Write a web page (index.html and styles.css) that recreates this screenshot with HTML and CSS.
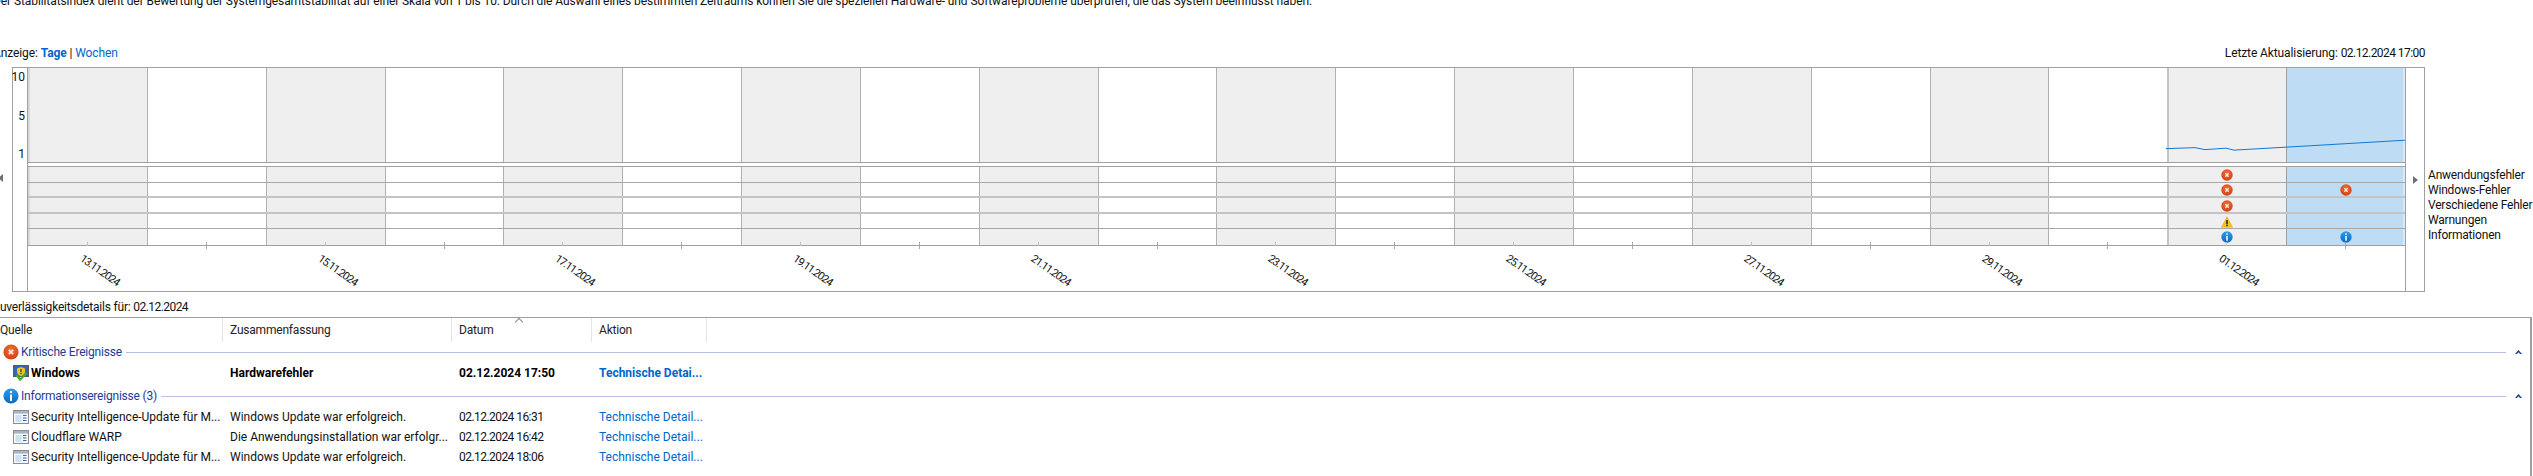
FILE: index.html
```html
<!DOCTYPE html>
<html lang="de">
<head>
  <meta charset="UTF-8" />
  <title>Zuverlässigkeitsverlauf</title>
  <link rel="stylesheet" href="styles.css">
</head>
<body>
  <svg class="defs" width="0" height="0">
    <defs>
      <radialGradient id="errorFill" cx="50%" cy="35%" r="65%">
        <stop offset="0" stop-color="#f0703a"/>
        <stop offset="1" stop-color="#d23f10"/>
      </radialGradient>
      <linearGradient id="infoFill" x1="0" y1="0" x2="0" y2="1">
        <stop offset="0" stop-color="#2f9be8"/>
        <stop offset="1" stop-color="#0a6cc4"/>
      </linearGradient>
      <symbol id="errorIcon" viewBox="0 0 16 16">
        <circle cx="8" cy="8" r="7.6" fill="url(#errorFill)"/>
        <path d="M5.8 5.8l4.4 4.4M10.2 5.8l-4.4 4.4" stroke="#fbe9e0" stroke-width="1.8"/>
      </symbol>
      <symbol id="infoIcon" viewBox="0 0 16 16">
        <circle cx="8" cy="8" r="7.6" fill="url(#infoFill)"/>
        <rect x="7" y="3" width="2" height="2" fill="#fff"/>
        <rect x="7" y="6.4" width="2" height="6.6" fill="#fff"/>
      </symbol>
      <symbol id="warnIcon" viewBox="0 0 16 16">
        <path d="M8 1L15.4 15H.6z" fill="#f7c51c" stroke="#d89b10" stroke-width=".6"/>
        <rect x="7" y="5.4" width="2" height="5.4" fill="#222"/>
        <rect x="7" y="11.6" width="2" height="2" fill="#222"/>
      </symbol>
      <symbol id="windowIcon" viewBox="0 0 16 16">
        <rect x=".5" y="1.5" width="15" height="13" fill="#f7f8fa" stroke="#8d8d8d"/>
        <rect x="1" y="2" width="14" height="2.6" fill="#a8b4c4"/>
        <rect x="2.5" y="6" width="6" height="7" fill="#cfe0f4"/>
        <path d="M10 6.5h3.5M10 9h3.5M10 11.5h3.5" stroke="#3d66a8"/>
      </symbol>
      <symbol id="windowsIcon" viewBox="0 0 16 16">
        <rect x=".5" y=".5" width="15" height="11" fill="#3466b8" stroke="#5a5a5a"/>
        <path d="M8 2L12 3.4V7c0 2-2 3.4-4 4.2C6 10.4 4 9 4 7V3.4z" fill="#e8c62c"/>
        <path d="M7.3 4h1.4v3.2H7.3zM7.3 8h1.4v1.3H7.3z" fill="#444"/>
        <path d="M3.5 10l3.6 4.6L13.5 8" fill="none" stroke="#3fae2a" stroke-width="2.2"/>
      </symbol>
    </defs>
  </svg>

  <div class="page">
    <p class="intro">Der Stabilitätsindex dient der Bewertung der Systemgesamtstabilität auf einer Skala von 1 bis 10. Durch die Auswahl eines bestimmten Zeitraums können Sie die speziellen Hardware- und Softwareprobleme überprüfen, die das System beeinflusst haben.</p>

    <div class="toolbar">
      <span>Anzeige: <a class="link strong">Tage</a> | <a class="link">Wochen</a></span>
      <span>Letzte Aktualisierung: <span class="stamp">02.12.2024 17:00</span></span>
    </div>

    <div class="chart-wrap">
      <div class="arrow arrow-left"></div>
      <div class="chart">
        <div class="y-axis">
          <span>10</span>
          <span>5</span>
          <span>1</span>
        </div>
        <div class="plot">
          <div class="index days">
            <div class="day"></div><div class="day"></div><div class="day"></div><div class="day"></div>
            <div class="day"></div><div class="day"></div><div class="day"></div><div class="day"></div>
            <div class="day"></div><div class="day"></div><div class="day"></div><div class="day"></div>
            <div class="day"></div><div class="day"></div><div class="day"></div><div class="day"></div>
            <div class="day"></div><div class="day"></div><div class="day"></div><div class="day selected"></div>
            <svg class="trend" viewBox="0 0 2377 95" preserveAspectRatio="none">
              <polyline points="2138,81.5 2167,80.5 2177,82.5 2198,81 2206,83 2258,80 2377,73"/>
            </svg>
          </div>
          <div class="events days">
            <div class="day"></div><div class="day"></div><div class="day"></div><div class="day"></div>
            <div class="day"></div><div class="day"></div><div class="day"></div><div class="day"></div>
            <div class="day"></div><div class="day"></div><div class="day"></div><div class="day"></div>
            <div class="day"></div><div class="day"></div><div class="day"></div><div class="day"></div>
            <div class="day"></div><div class="day"></div><div class="day"></div><div class="day selected"></div>
            <div class="lanes days">
              <div class="row-line r1"></div>
              <div class="row-line r2 thick"></div>
              <div class="row-line r3 thick"></div>
              <div class="row-line r4"></div>
              <svg class="ev d19 r1"><use href="#errorIcon"/></svg>
              <svg class="ev d19 r2"><use href="#errorIcon"/></svg>
              <svg class="ev d20 r2"><use href="#errorIcon"/></svg>
              <svg class="ev d19 r3"><use href="#errorIcon"/></svg>
              <svg class="ev d19 r4"><use href="#warnIcon"/></svg>
              <svg class="ev d19 r5"><use href="#infoIcon"/></svg>
              <svg class="ev d20 r5"><use href="#infoIcon"/></svg>
            </div>
          </div>
          <div class="dates days">
            <div class="tick"><span>13.11.2024</span></div><div class="tick long"></div>
            <div class="tick"><span>15.11.2024</span></div><div class="tick long"></div>
            <div class="tick"><span>17.11.2024</span></div><div class="tick long"></div>
            <div class="tick"><span>19.11.2024</span></div><div class="tick long"></div>
            <div class="tick"><span>21.11.2024</span></div><div class="tick long"></div>
            <div class="tick"><span>23.11.2024</span></div><div class="tick long"></div>
            <div class="tick"><span>25.11.2024</span></div><div class="tick long"></div>
            <div class="tick"><span>27.11.2024</span></div><div class="tick long"></div>
            <div class="tick"><span>29.11.2024</span></div><div class="tick long"></div>
            <div class="tick"><span>01.12.2024</span></div><div class="tick long"></div>
          </div>
        </div>
        <div class="side"><div class="arrow arrow-right"></div></div>
      </div>
      <ul class="legend">
        <li>Anwendungsfehler</li>
        <li>Windows-Fehler</li>
        <li>Verschiedene Fehler</li>
        <li>Warnungen</li>
        <li>Informationen</li>
      </ul>
    </div>

    <div class="details-title">Zuverlässigkeitsdetails für: <span class="stamp">02.12.2024</span></div>

    <div class="details">
      <div class="row head">
        <div class="cell">Quelle</div>
        <div class="cell">Zusammenfassung</div>
        <div class="cell sorted">Datum</div>
        <div class="cell">Aktion</div>
      </div>

      <div class="group">
        <svg class="group-icon"><use href="#errorIcon"/></svg>
        <span>Kritische Ereignisse</span>
        <i class="group-line"></i>
        <b class="collapse"></b>
      </div>
      <div class="row item critical">
        <div class="cell source"><svg class="src-icon"><use href="#windowsIcon"/></svg>Windows</div>
        <div class="cell">Hardwarefehler</div>
        <div class="cell">02.12.2024 17:50</div>
        <div class="cell"><a class="link">Technische Detai...</a></div>
      </div>

      <div class="group">
        <svg class="group-icon"><use href="#infoIcon"/></svg>
        <span>Informationsereignisse (3)</span>
        <i class="group-line"></i>
        <b class="collapse"></b>
      </div>
      <div class="row item">
        <div class="cell source"><svg class="src-icon"><use href="#windowIcon"/></svg>Security Intelligence-Update für M...</div>
        <div class="cell">Windows Update war erfolgreich.</div>
        <div class="cell stamp">02.12.2024 16:31</div>
        <div class="cell"><a class="link">Technische Detail...</a></div>
      </div>
      <div class="row item">
        <div class="cell source"><svg class="src-icon"><use href="#windowIcon"/></svg>Cloudflare WARP</div>
        <div class="cell">Die Anwendungsinstallation war erfolgr...</div>
        <div class="cell stamp">02.12.2024 16:42</div>
        <div class="cell"><a class="link">Technische Detail...</a></div>
      </div>
      <div class="row item">
        <div class="cell source"><svg class="src-icon"><use href="#windowIcon"/></svg>Security Intelligence-Update für M...</div>
        <div class="cell">Windows Update war erfolgreich.</div>
        <div class="cell stamp">02.12.2024 18:06</div>
        <div class="cell"><a class="link">Technische Detail...</a></div>
      </div>
    </div>
  </div>
</body>
</html>
```

FILE: styles.css
```css
* {
  box-sizing: border-box;
}

html,
body {
  margin: 0;
  height: 476px;
  overflow: hidden;
  background: #fff;
}

body {
  font-family: Roboto, "Open Sans", sans-serif;
  font-size: 12px;
  color: #111;
}

.defs {
  display: block;
  height: 0;
}

.page {
  margin-left: -7px;
  width: 2540px;
}

.stamp {
  letter-spacing: -0.55px;
}

.intro {
  margin: -8px 0 0;
  height: 18px;
  line-height: 18px;
  letter-spacing: -0.09px;
  white-space: nowrap;
}

.toolbar {
  display: flex;
  justify-content: space-between;
  align-items: center;
  height: 18px;
  margin-top: 34px;
  width: 2432px;
  letter-spacing: -0.1px;
}

.link {
  color: #0066cc;
}

.strong {
  font-weight: 700;
}

.chart-wrap {
  display: flex;
  margin-top: 5px;
  position: relative;
}

.arrow {
  width: 0;
  height: 0;
  border-top: 4px solid transparent;
  border-bottom: 4px solid transparent;
}

.arrow-left {
  position: absolute;
  left: 5px;
  top: 107px;
  border-right: 5px solid #707070;
}

.arrow-right {
  border-left: 5px solid #707070;
}

.chart {
  display: flex;
  flex: none;
  margin-left: 19px;
  width: 2413px;
  height: 225px;
  border: 1px solid #a0a0a0;
}

.y-axis {
  flex: none;
  position: relative;
  width: 15px;
  border-right: 1px solid #a0a0a0;
}

.y-axis span {
  position: absolute;
  right: 2px;
  line-height: 14px;
}

.y-axis span:nth-child(1) {
  top: 2px;
}

.y-axis span:nth-child(2) {
  top: 41px;
}

.y-axis span:nth-child(3) {
  top: 79px;
}

.plot {
  width: 2377px;
  flex: none;
  display: flex;
  flex-direction: column;
}

.days {
  display: grid;
  grid-template-columns: repeat(20, 1fr);
}

.day {
  border-left: 1px solid #b0b0b0;
}

.day:nth-child(odd) {
  background: #efefef;
}

.day:first-child {
  border-left: 2px solid #d8d8d8;
}

.day:nth-child(19) {
  border-left: 2px solid #c4c4c4;
}

.day.selected {
  background: #bfdcf5;
  border-left-color: #a0a0a0;
  border-right: 2px solid #d8e8f5;
}

.index {
  position: relative;
  height: 95px;
  border-bottom: 1px solid #a0a0a0;
}

.trend {
  position: absolute;
  left: 0;
  top: 0;
  width: 100%;
  height: 100%;
}

.trend polyline {
  fill: none;
  stroke: #0f78d4;
  stroke-width: 1;
}

.events {
  position: relative;
  height: 80px;
  margin-top: 3px;
  border-top: 1px solid #a0a0a0;
  border-bottom: 1px solid #a0a0a0;
}

.lanes {
  position: absolute;
  inset: 0;
  grid-template-rows: repeat(5, 1fr);
}

.row-line {
  grid-column: 1 / -1;
  align-self: end;
  height: 1px;
  background: #a8a8a8;
}

.row-line.thick {
  height: 2px;
  background: #c4c4c4;
}

.r1 { grid-row: 1; }
.r2 { grid-row: 2; }
.r3 { grid-row: 3; }
.r4 { grid-row: 4; }
.r5 { grid-row: 5; }
.d19 { grid-column: 19; }
.d20 { grid-column: 20; }

.ev {
  width: 12px;
  height: 12px;
  justify-self: center;
  align-self: center;
}

.dates {
  flex: 1;
}

.tick {
  position: relative;
}

.tick::before {
  content: "";
  position: absolute;
  left: 59px;
  top: -4px;
  width: 1px;
  height: 4px;
  background: #c0c0c0;
}

.tick.long::before {
  height: 7px;
  background: #a8a8a8;
}

.tick span {
  position: absolute;
  left: 57px;
  top: 6px;
  font-size: 11px;
  letter-spacing: -1px;
  white-space: nowrap;
  transform-origin: left top;
  transform: rotate(35deg);
}

.side {
  flex: 1;
  display: flex;
  justify-content: center;
  align-items: center;
  border-left: 1px solid #a0a0a0;
}

.legend {
  flex: none;
  list-style: none;
  margin: 101px 0 0 3px;
  padding: 0;
  line-height: 15px;
  letter-spacing: -0.2px;
  white-space: nowrap;
}

.details-title {
  height: 18px;
  line-height: 18px;
  margin-top: 6px;
  letter-spacing: -0.2px;
}

.details {
  width: 2539px;
  height: 160px;
  margin-top: 1px;
  border-top: 1px solid #a0a0a0;
  border-right: 2px solid #a0a0a0;
}

.row {
  display: grid;
  grid-template-columns: 230px 229px 140px 115px;
  align-items: center;
}

.cell {
  padding-left: 7px;
  white-space: nowrap;
  overflow: hidden;
}

.row.head {
  height: 24px;
  letter-spacing: -0.2px;
}

.head .cell {
  height: 24px;
  line-height: 24px;
  border-right: 1px solid #e5e5e5;
  color: #222;
}

.sorted {
  position: relative;
}

.sorted::before {
  content: "";
  position: absolute;
  left: 64px;
  top: 1px;
  width: 5px;
  height: 5px;
  border: solid #8a8a8a;
  border-width: 1px 0 0 1px;
  transform: rotate(45deg);
}

.group {
  display: flex;
  align-items: center;
  height: 20px;
  padding-left: 10px;
  color: #1e3c96;
  letter-spacing: -0.2px;
}

.group + .row + .group {
  margin-top: 3px;
}

.group-icon {
  width: 16px;
  height: 16px;
  margin-right: 2px;
  flex: none;
}

.group-line {
  flex: 1;
  height: 1px;
  margin: 0 9px 0 4px;
  background: #b9c1dc;
}

.collapse {
  width: 7px;
  height: 4px;
  margin-right: 8px;
  background: #1e3c96;
  clip-path: polygon(50% 0, 100% 100%, 72% 100%, 50% 55%, 28% 100%, 0 100%);
}

.item {
  height: 20px;
}

.group + .item {
  margin-top: 1px;
}

.source {
  display: flex;
  align-items: center;
  padding-left: 20px;
}

.src-icon {
  width: 16px;
  height: 16px;
  margin-right: 2px;
  flex: none;
}

.critical {
  font-weight: 700;
  color: #000;
}
```
